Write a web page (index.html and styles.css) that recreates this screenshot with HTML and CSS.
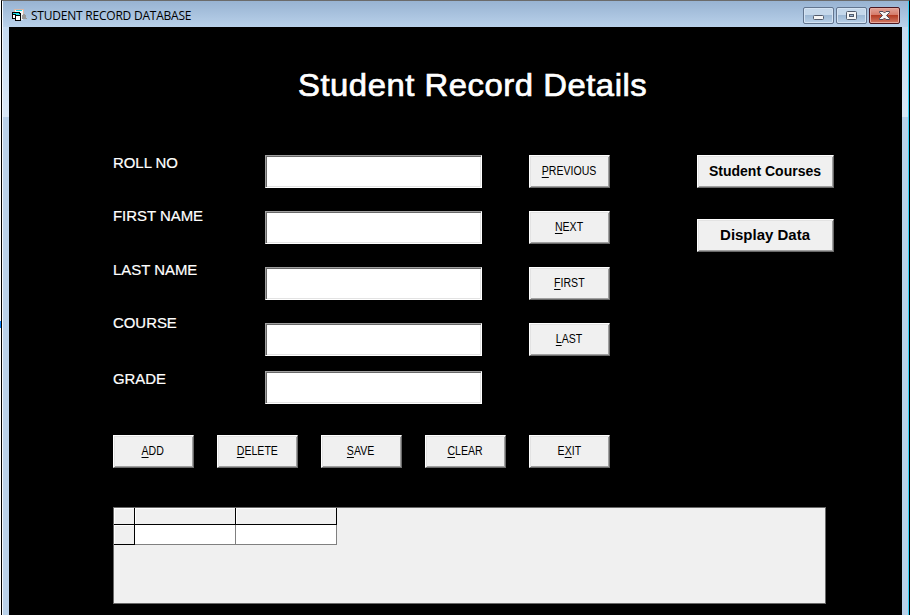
FILE: index.html
```
<!DOCTYPE html>
<html lang="en">
<head>
<meta charset="utf-8">
<title>STUDENT RECORD DATABASE</title>
<link rel="stylesheet" href="styles.css">
</head>
<body>
<div class="window">
  <header class="titlebar">
    <svg class="app-icon" width="16" height="14" viewBox="0 0 16 14" shape-rendering="crispEdges">
      <path fill="#d8b8a8" d="M2 0h10v1H2zM2 1h1v3H2zM11 1h1v5h-1z"/>
      <path fill="#f4f4f4" d="M3 1h8v10H3z"/>
      <path fill="#19dce8" d="M4 1h6v1H4z"/>
      <path fill="#999" d="M11 5h2v1h1v3h1v1h-5V6h1z"/>
      <path fill="#000" d="M0 3h8v1h1v8H3v-2H0z"/>
      <path fill="#fff" d="M1 6h2v3H1zM4 7h4v4H4z"/>
      <path fill="#19dce8" d="M1 4h6v1H1zM4 5h4v1H4z"/>
    </svg>
    <h1 class="caption">STUDENT RECORD DATABASE</h1>
    <div class="controls">
      <span class="control"><svg width="29" height="15" viewBox="0 0 29 15"><rect x="9.500" y="7.500" width="10" height="4" rx="1" fill="#f5f5f5" stroke="#535c6c"/></svg></span>
      <span class="control"><svg width="29" height="15" viewBox="0 0 29 15"><rect x="9.500" y="3.500" width="10" height="8" rx="1" fill="#f5f5f5" stroke="#535c6c"/><rect x="12.500" y="6.500" width="4" height="2" fill="#9eb6d0" stroke="#535c6c"/></svg></span>
      <span class="control close"><svg width="29" height="15" viewBox="0 0 29 15"><path d="M9.500 3.500h3.500l1.500 1.500 1.500-1.500h3.500v1l-3 3 3 3v1H16L14.500 10 13 11.500H9.500v-1l3-3-3-3z" fill="#f5f5f5" stroke="#514a5a"/></svg></span>
    </div>
  </header>
  <main class="client">
    <h2 class="heading"><span>Student Record Details</span></h2>
    <section class="form">
      <div class="labels">
        <label class="l1" for="roll">ROLL NO</label>
        <label class="l2" for="first">FIRST NAME</label>
        <label class="l3" for="last">LAST NAME</label>
        <label class="l4" for="course">COURSE</label>
        <label class="l5" for="grade">GRADE</label>
      </div>
      <div class="fields">
        <input id="roll"><input id="first"><input id="last"><input id="course"><input id="grade">
      </div>
      <div class="nav">
        <button class="btn"><span><u>P</u>REVIOUS</span></button>
        <button class="btn"><span><u>N</u>EXT</span></button>
        <button class="btn"><span><u>F</u>IRST</span></button>
        <button class="btn"><span><u>L</u>AST</span></button>
      </div>
      <div class="views">
        <button class="btn wide"><span>Student Courses</span></button>
        <button class="btn wide display"><span>Display Data</span></button>
      </div>
    </section>
    <section class="actions">
      <button class="btn"><span><u>A</u>DD</span></button>
      <button class="btn"><span><u>D</u>ELETE</span></button>
      <button class="btn"><span><u>S</u>AVE</span></button>
      <button class="btn"><span><u>C</u>LEAR</span></button>
      <button class="btn"><span>E<u>X</u>IT</span></button>
    </section>
    <section class="datagrid">
      <div class="cells">
        <i class="head"></i><i class="head"></i><i class="head"></i>
        <i class="head"></i><i class="cell"></i><i class="cell"></i>
      </div>
    </section>
  </main>
</div>
<i class="edge-mark"></i>
</body>
</html>
```
FILE: styles.css
```
* { box-sizing: border-box; }
body {
  margin: 0;
  width: 910px;
  height: 615px;
  overflow: hidden;
  background: #fff;
  font-family: "Liberation Sans", Arial, sans-serif;
}
.window {
  margin-left: 1px;
  width: 909px;
  height: 615px;
  padding: 0 7px 0 7px;
  border-top: 1px solid #6b6b6b;
  border-left: 1px solid #000;
  border-right: 1px solid #000;
  background: linear-gradient(#c5daf0, #dae8f7) 0 26px / 100% 90px no-repeat, #b9d1ea;
  box-shadow: inset 1px 0 #f4f9ff, inset -1px 0 #2fd0f5;
}
.titlebar {
  display: flex;
  align-items: center;
  height: 26px;
  margin: 0 -6px;
  padding: 0 8px;
  background: linear-gradient(#98b3d2, #b9d1ea);
}
.app-icon { margin-top: 4px; margin-left: 1px; }
.caption {
  margin: 3px 0 0 3px;
  font: 12px/16px "Open Sans", sans-serif;
  letter-spacing: -.22px;
  white-space: nowrap;
  color: #000;
}
.controls { display: flex; gap: 2px; margin: 3px 0 0 auto; align-self: center; }
.control {
  width: 31px;
  height: 17px;
  border: 1px solid #62758f;
  border-radius: 2px;
  background: linear-gradient(#c5d8eb 45%, #9eb9d5 50%, #b8d0e8);
  box-shadow: inset 0 0 0 1px #d4e3f3;
}
.control svg { display: block; }
.close {
  border-color: #4b1620;
  background: linear-gradient(#e2a398, #d67c6b 45%, #b53c24 50%, #d07a65);
  box-shadow: inset 0 0 0 1px #e7a99d;
}
.client {
  height: 588px;
  background: #000;
  color: #fff;
  padding: 40px 0 0 104px;
}
.heading { margin: 0 0 0 185px; height: 88px; font-size: 31px; line-height: 38px; font-weight: 400; white-space: nowrap; -webkit-text-stroke: .7px #fff; letter-spacing: .5px; }
.heading span { display: inline-block; transform: scaleX(1.059); transform-origin: 0 50%; }
.form { display: flex; height: 280px; }
.labels { width: 152px; font-size: 14px; line-height: 16px; }
.labels label { display: block; height: 16px; margin-bottom: 37px; white-space: nowrap; -webkit-text-stroke: .2px #fff; transform: scaleX(1.065); transform-origin: 0 50%; }
.labels .l2 { margin-bottom: 38px; }
.labels .l4 { margin-bottom: 40px; }
.fields { display: flex; flex-direction: column; gap: 23px; width: 264px; }
.fields input {
  width: 217px;
  height: 33px;
  padding: 0;
  border: 1px solid #fff;
  border-top-color: #a0a0a0;
  border-left-color: #a0a0a0;
  box-shadow: inset 1px 1px #696969, inset -1px -1px #e3e3e3;
  background: #fff;
  border-radius: 0;
  outline: 0;
}
.fields input:last-child { margin-top: -8px; }
.nav { display: flex; flex-direction: column; gap: 23px; width: 168px; }
.views { display: flex; flex-direction: column; gap: 31px; }
.btn {
  width: 81px;
  height: 33px;
  padding: 0 1px 2px 0;
  border: 1px solid #696969;
  border-top-color: #fff;
  border-left-color: #fff;
  border-radius: 0;
  background: #f0f0f0;
  box-shadow: inset 1px 1px #e3e3e3, inset -1px -1px #a0a0a0;
  font: 12px/14px "Liberation Sans", Arial, sans-serif;
  color: #000;
}
.btn span { display: inline-block; transform: scaleX(.88); white-space: nowrap; }
.btn u { text-underline-offset: 2px; text-decoration-thickness: 1px; }
.wide { width: 137px; font-weight: 700; font-size: 14px; }
.wide span { transform: none; }
.display span { transform: scaleX(1.07); }
.actions { display: flex; gap: 23px; height: 72px; }
.datagrid { width: 713px; height: 97px; border: 1px solid #696969; background: #f0f0f0; }
.cells { display: grid; grid-template-columns: 21px 101px 101px; grid-template-rows: 17px 20px; width: 223px; }
.head { border-right: 1px solid #000; border-bottom: 1px solid #000; box-shadow: inset 1px 1px #fff; }
.cell { border-right: 1px solid #808080; border-bottom: 1px solid #808080; background: #fff; }
.edge-mark { position: absolute; left: 0; top: 321px; width: 1px; height: 7px; background: #0a84ff; }
```
